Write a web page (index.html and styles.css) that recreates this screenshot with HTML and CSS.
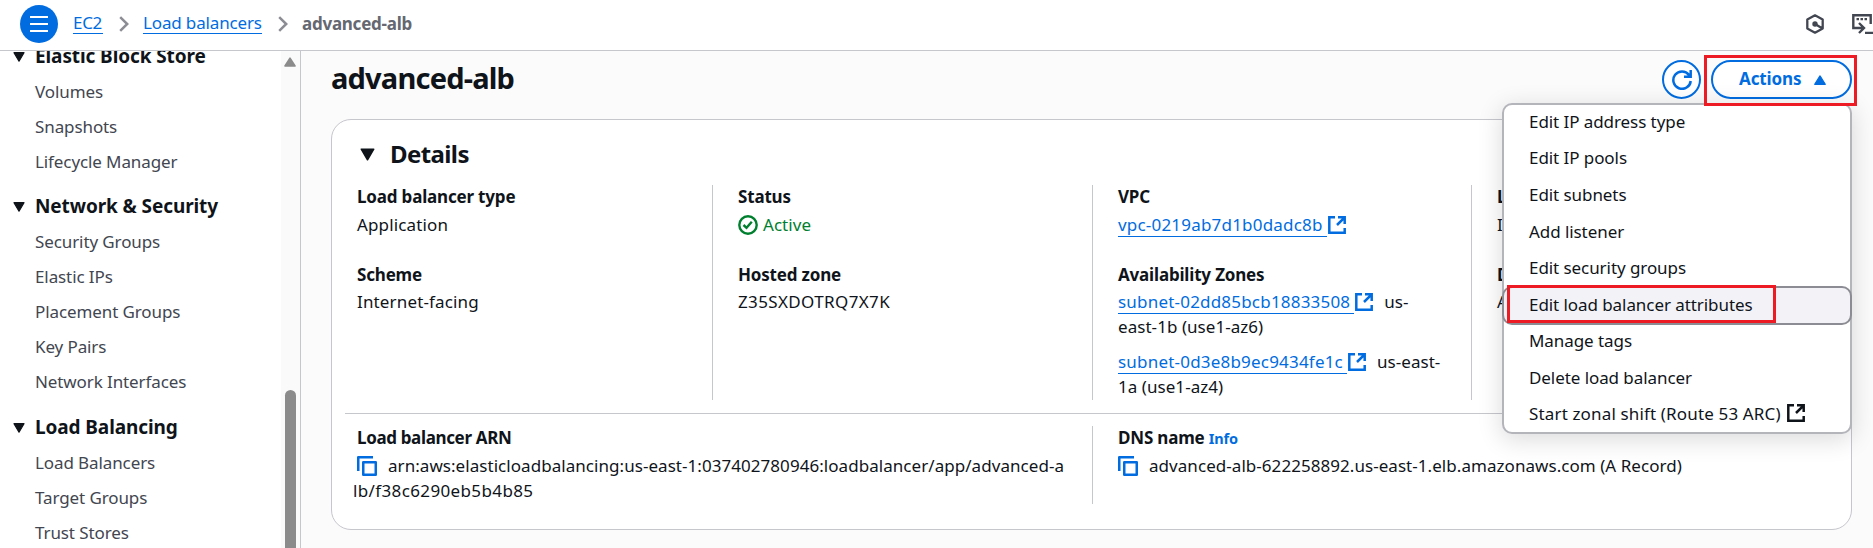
FILE: index.html
```html
<!DOCTYPE html>
<html lang="en">
<head>
<meta charset="utf-8">
<title>advanced-alb | EC2</title>
<link rel="stylesheet" href="styles.css">
</head>
<body>
<svg class="defs" width="0" height="0" aria-hidden="true">
  <symbol id="ext" viewBox="0 0 18 18"><path d="M7 1.3H1.3v15.4h15.4V12M10 1.3h6.7V8M16.2 1.8 9 9" fill="none" stroke="currentColor" stroke-width="2.5"/></symbol>
  <symbol id="copy" viewBox="0 0 20 20"><path d="M1.25 15V1.25H16M6.25 6.25h12.5v12.5H6.25z" fill="none" stroke="currentColor" stroke-width="2.5" stroke-linejoin="round"/></symbol>
  <symbol id="down" viewBox="0 0 12 10"><path d="M1 .7h10L6 9.2z" fill="currentColor" stroke="currentColor" stroke-width="1.2" stroke-linejoin="round"/></symbol>
  <symbol id="chev" viewBox="0 0 10 16"><path d="M1.2 1.2 8.2 8l-7 6.8" fill="none" stroke="currentColor" stroke-width="2.5"/></symbol>
</svg>
<header class="topbar">
  <button class="burger" aria-label="Menu"><i></i><i></i><i></i></button>
  <nav class="crumbs">
    <a class="c-ec2" href="#">EC2</a>
    <svg class="chev"><use href="#chev"/></svg>
    <a class="c-lb" href="#">Load balancers</a>
    <svg class="chev"><use href="#chev"/></svg>
    <b>advanced-alb</b>
  </nav>
  <svg class="hex" viewBox="0 0 18 20"><path d="M9 1.300l7.700 4.200v9L9 18.700 1.300 14.500v-9zM9 10l7.500 4.400" fill="none" stroke="currentColor" stroke-width="2.300" stroke-linejoin="round"/><circle cx="9" cy="10" r="2.700" fill="currentColor"/></svg>
  <svg class="shell" viewBox="0 0 21 20"><path d="M5 14H1.300V1.300h17.400V10M5 14h6M7 9l5 5-5 5M13 19h8" fill="none" stroke="currentColor" stroke-width="2.400"/><path d="M4.500 5.200h11" stroke="currentColor" stroke-width="2.200" stroke-dasharray="2.500 1.500"/></svg>
</header>
<div class="body">
  <aside class="side">
    <nav class="tree">
      <section>
        <h3><svg><use href="#down"/></svg>Elastic Block Store</h3>
        <a>Volumes</a><a>Snapshots</a><a>Lifecycle Manager</a>
      </section>
      <section>
        <h3><svg><use href="#down"/></svg>Network &amp; Security</h3>
        <a>Security Groups</a><a>Elastic IPs</a><a>Placement Groups</a><a>Key Pairs</a><a>Network Interfaces</a>
      </section>
      <section>
        <h3><svg><use href="#down"/></svg>Load Balancing</h3>
        <a>Load Balancers</a><a>Target Groups</a><a>Trust Stores</a>
      </section>
    </nav>
    <div class="scroll">
      <svg viewBox="0 0 12 10"><path d="M6 1.200 11 9H1z" fill="currentColor" stroke="currentColor" stroke-width="1.600" stroke-linejoin="round"/></svg>
      <div class="thumb"></div>
    </div>
  </aside>
  <main class="main">
    <div class="head">
      <h1>advanced-alb</h1>
      <button class="refresh" aria-label="Refresh"><svg viewBox="0 0 20 20"><path d="M18.700 11A8.700 8.700 0 1 1 17 4.900L18.500 6.500M18.700 0v6.800H12" fill="none" stroke="currentColor" stroke-width="2.500"/></svg></button>
      <div class="dropdown">
        <button class="actions">Actions<svg viewBox="0 0 12 10"><path d="M6 .9 11.300 9.300H.7z" fill="currentColor" stroke="currentColor" stroke-width="1.200" stroke-linejoin="round"/></svg></button>
        <ul class="menu">
          <li>Edit IP address type</li>
          <li>Edit IP pools</li>
          <li>Edit subnets</li>
          <li>Add listener</li>
          <li>Edit security groups</li>
          <li class="on"><span>Edit load balancer attributes</span><i class="mark mark-item"></i></li>
          <li>Manage tags</li>
          <li>Delete load balancer</li>
          <li class="shift">Start zonal shift (Route 53 ARC)<svg class="ext"><use href="#ext"/></svg></li>
        </ul>
        <i class="mark mark-button"></i>
      </div>
    </div>
    <section class="card">
      <h2><svg><use href="#down"/></svg>Details</h2>
      <div class="row top">
        <div class="col">
          <dl><dt>Load balancer type</dt><dd class="wide">Application</dd></dl>
          <dl><dt>Scheme</dt><dd class="wide">Internet-facing</dd></dl>
        </div>
        <div class="col">
          <dl><dt>Status</dt><dd class="ok"><svg viewBox="0 0 20 20"><circle cx="10" cy="10" r="8.700" fill="none" stroke="currentColor" stroke-width="2.400"/><path d="m5.500 10 3 2.800 5.300-6" fill="none" stroke="currentColor" stroke-width="2.400"/></svg>Active</dd></dl>
          <dl><dt>Hosted zone</dt><dd class="zone">Z35SXDOTRQ7X7K</dd></dl>
        </div>
        <div class="col">
          <dl><dt>VPC</dt><dd><a class="link">vpc-0219ab7d1b0dadc8b</a><svg class="ext"><use href="#ext"/></svg></dd></dl>
          <dl><dt>Availability Zones</dt>
            <dd><a class="link">subnet-02dd85bcb18833508</a><svg class="ext"><use href="#ext"/></svg><span class="az">us-</span><br>east-1b (use1-az6)</dd>
            <dd class="next"><a class="link">subnet-0d3e8b9ec9434fe1c</a><svg class="ext"><use href="#ext"/></svg><span class="az">us-east-</span><br>1a (use1-az4)</dd>
          </dl>
        </div>
        <div class="col">
          <dl><dt>L</dt><dd>I</dd></dl>
          <dl><dt>D</dt><dd>A</dd></dl>
        </div>
      </div>
      <div class="row bottom">
        <div class="col">
          <dl><dt class="snug">Load balancer ARN</dt><dd class="arn"><svg class="copy"><use href="#copy"/></svg>arn:aws:elasticloadbalancing:us-east-1:037402780946:loadbalancer/app/advanced-a<br><span class="zone">lb/f38c6290eb5b4b85</span></dd></dl>
        </div>
        <div class="col">
          <dl><dt>DNS name <a class="info">Info</a></dt><dd><svg class="copy"><use href="#copy"/></svg>advanced-alb-622258892.us-east-1.elb.amazonaws.com (A Record)</dd></dl>
        </div>
      </div>
    </section>
  </main>
</div>
</body>
</html>
```
FILE: styles.css
```css
* { box-sizing: border-box; }
body { margin: 0; width: 1873px; height: 548px; overflow: hidden; display: flex; flex-direction: column; font: 17px/25px "Noto Sans", "Open Sans", sans-serif; letter-spacing: -0.1px; color: #0f141a; background: #fff; }
h1, h2, h3, dl, dd, ul { margin: 0; padding: 0; }
button { padding: 0; font: inherit; letter-spacing: inherit; background: #fff; border: 0; }
svg { display: block; flex: none; }
.defs { position: absolute; }

.topbar { height: 51px; flex: none; display: flex; align-items: center; padding: 0 0 3px 20px; border-bottom: 1px solid #c6c6cd; color: #424650; }
.burger { width: 38px; height: 38px; border-radius: 50%; background: #006ce0; display: flex; flex-direction: column; align-items: center; justify-content: center; gap: 5px; }
.burger i { width: 18px; height: 2px; background: #fff; }
.crumbs { display: flex; align-items: center; margin-left: 15px; flex: 1; }
.crumbs a { color: #006ce0; text-decoration: none; border-bottom: 1px solid #006ce0; line-height: 20px; letter-spacing: -0.15px; white-space: nowrap; }
.crumbs b { color: #656871; font-weight: 700; letter-spacing: -0.25px; }
.crumbs .c-ec2 { width: 30px; letter-spacing: -0.3px; }
.c-lb { width: 119px; }
.chev { width: 10px; height: 16px; margin: 0 14px 0 16px; color: #8c8c94; }
.hex { width: 18px; height: 20px; margin-right: 28px; }
.shell { width: 21px; height: 20px; }

.body { flex: 1; display: flex; min-height: 0; }
.side { width: 301px; border-right: 1px solid #c6c6cd; display: flex; overflow: hidden; }
.tree { flex: 1; padding-left: 13px; margin-top: -12px; color: #424650; }
.tree section { padding-bottom: 10px; }
.tree section + section { padding-bottom: 11px; }
.tree h3 { display: flex; align-items: center; height: 35px; color: #0f141a; font-size: 19px; }
.tree h3 svg { width: 12px; height: 10px; margin-right: 10px; }
.tree a { display: block; height: 35px; line-height: 35px; padding-left: 22px; }
.scroll { width: 19px; background: #fafafa; color: #8b8b8b; padding: 6px 4px 0 3px; height: 497px; }
.scroll svg { width: 12px; height: 10px; }
.thumb { width: 11px; height: 170px; margin: 323px 0 0 1px; border-radius: 6px; background: #8b8b8b; }

.main { flex: 1; background: #fbfbfb; padding: 9px 21px 0 30px; }
.head { display: flex; height: 59px; align-items: flex-start; }
.head h1 { flex: 1; font-size: 29px; line-height: 36px; letter-spacing: -0.8px; }
.refresh { width: 39px; height: 39px; border: 2px solid #006ce0; border-radius: 50%; color: #006ce0; display: flex; align-items: center; justify-content: center; margin-right: 10px; }
.refresh svg { width: 20px; height: 20px; }
.dropdown { position: relative; }
.actions { width: 141px; height: 39px; border: 2px solid #006ce0; border-radius: 20px; color: #006ce0; font-weight: 700; display: flex; align-items: center; padding: 0 0 2px 26px; }
.actions svg { width: 12px; height: 10px; margin: 2px 24px 0 auto; }

.menu { position: absolute; z-index: 2; top: 43px; right: 0; width: 350px; height: 331px; list-style: none; background: #fff; border: 2px solid #b4b4bb; border-radius: 10px; box-shadow: 0 5px 25px 1px rgba(0, 7, 22, .14); }
.menu li { height: 36.6px; display: flex; align-items: center; padding-left: 25px; letter-spacing: -0.07px; }
.menu li:first-child { margin-top: -2px; }
.menu .shift { letter-spacing: 0.15px; padding-bottom: 2px; }
.menu .on { position: relative; margin: 0 -2px -2px; height: 38.6px; padding: 0 0 2px 25px; border: 2px solid #8c8c94; border-radius: 10px; background: #f3f3f7; }
.mark { position: absolute; border: 3px solid #ed1c24; }
.mark-item { left: 3px; top: -3px; width: 269px; height: 38px; }
.mark-button { z-index: 3; left: -7px; top: -5px; width: 153px; height: 51px; }

.card { height: 411px; border: 1px solid #c6c6cd; border-radius: 20px; background: #fff; padding: 0 0 0 13px; }
.card h2 { display: flex; align-items: center; height: 65px; padding: 1px 0 0 15px; font-size: 24px; letter-spacing: -0.6px; }
.card h2 svg { width: 15px; height: 13px; margin: 3px 15px 0 0; }
.row { display: grid; }
.top { grid-template-columns: 368px 380px 379px 1fr; height: 229px; padding-bottom: 13px; border-bottom: 1px solid #c6c6cd; }
.bottom { grid-template-columns: 748px 1fr; margin-top: 12px; height: 78px; }
.col { padding-left: 25px; white-space: nowrap; border-right: 1px solid #c6c6cd; }
.col:first-child { padding-left: 12px; }
.col:last-child { border: 0; }
dt { font-weight: 700; height: 28px; line-height: 25px; margin-top: -1px; letter-spacing: -0.18px; }
.snug { letter-spacing: -0.35px; }
dd { letter-spacing: 0.05px; }
dl + dl { padding-top: 26px; }
dl + dl dt { height: 27px; }
dd.next { margin-top: 10px; }
.wide { letter-spacing: 0.15px; }
.zone { letter-spacing: 0.37px; }
.ok { display: flex; align-items: center; gap: 5px; color: #00802f; }
.ok svg { width: 20px; height: 20px; }
.link { color: #006ce0; border-bottom: 1px solid #006ce0; padding-right: 4px; letter-spacing: 0.2px; }
.ext { display: inline-block; width: 18px; height: 18px; margin-left: 1px; vertical-align: -3px; }
dd .ext { color: #006ce0; }
.menu .ext { margin-left: 6px; }
.az { margin-left: 11px; }
.copy { display: inline-block; width: 20px; height: 20px; color: #006ce0; margin-right: 11px; vertical-align: -4px; }
.arn { margin-left: -4px; }
.arn .copy { margin-left: 4px; }
.info { font-size: 14.5px; color: #006ce0; }
```
